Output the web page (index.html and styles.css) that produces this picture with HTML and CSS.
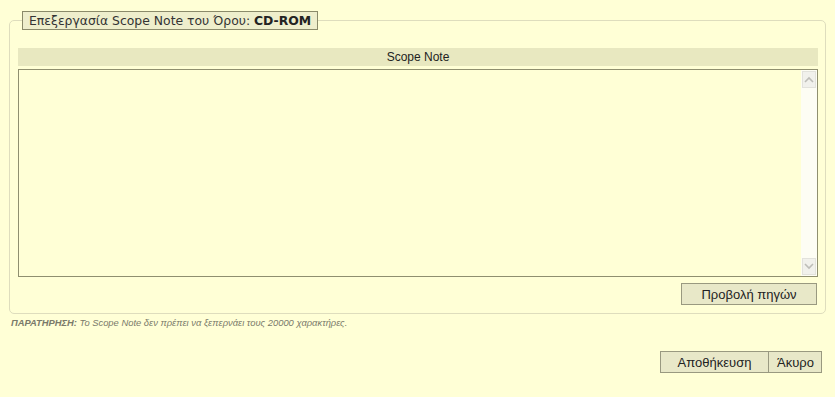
FILE: index.html
```html
<!DOCTYPE html>
<html lang="el">
<head>
  <meta charset="UTF-8" />
  <title>Επεξεργασία Scope Note</title>
  <link rel="stylesheet" href="styles.css">
</head>
<body>

<div class="page">
  <!-- Editor -->
  <fieldset class="editor">
    <legend>Επεξεργασία Scope Note του Όρου: <strong>CD-ROM</strong></legend>

    <div class="bar">Scope Note</div>

    <div class="note-box">
      <textarea class="note-text"></textarea>
      <div class="scroll">
        <span class="arrow">
          <svg width="10" height="7" viewBox="0 0 10 7"><path d="M1 6 L5 2 L9 6" fill="none" stroke="#bdbdb8" stroke-width="1.6"/></svg>
        </span>
        <span class="arrow">
          <svg width="10" height="7" viewBox="0 0 10 7"><path d="M1 1 L5 5 L9 1" fill="none" stroke="#bdbdb8" stroke-width="1.6"/></svg>
        </span>
      </div>
    </div>

    <div class="row">
      <button class="btn">Προβολή πηγών</button>
    </div>
  </fieldset>

  <p class="hint"><strong>ΠΑΡΑΤΗΡΗΣΗ:</strong> Το Scope Note δεν πρέπει να ξεπερνάει τους 20000 χαρακτήρες.</p>

  <!-- Actions -->
  <div class="actions">
    <button class="btn save">Αποθήκευση</button><button class="btn cancel">Άκυρο</button>
  </div>
</div>

</body>
</html>
```

FILE: styles.css
```css
body {
  margin: 0;
  background: #ffffd6;
  color: #222;
  font-family: "Liberation Sans", Arial, sans-serif;
}

.page {
  padding: 11px 9px 0 9px;
}

.editor {
  margin: 0;
  padding: 18px 7px 8px 8px;
  border: 1px solid #deddbd;
  border-radius: 5px;
}

.editor legend {
  margin-left: 4px;
  padding: 1px 6px;
  background: #eeeecc;
  border: 1px solid #8a8a6a;
  font-family: "DejaVu Sans", Verdana, sans-serif;
  font-size: 12.4px;
  color: #333;
}

.editor legend strong {
  color: #222;
}

.bar {
  height: 18px;
  line-height: 18px;
  background: #e8e8c0;
  text-align: center;
  font-size: 12px;
  color: #222;
}

.note-box {
  display: flex;
  margin-top: 3px;
  height: 206px;
  border: 1px solid #8f8f6f;
}

.note-text {
  flex: 1;
  margin: 0;
  padding: 2px;
  border: none;
  background: transparent;
  resize: none;
  outline: none;
  font-family: "Liberation Sans", Arial, sans-serif;
}

.scroll {
  width: 16px;
  background: #fdfdf4;
  display: flex;
  flex-direction: column;
  justify-content: space-between;
}

.arrow {
  display: flex;
  align-items: center;
  justify-content: center;
  height: 15px;
  margin: 1px;
  border: 1px solid #e2e2dc;
  background: #f1f1ec;
}

.row {
  display: flex;
  justify-content: flex-end;
  padding: 6px 1px 0 0;
}

.btn {
  height: 22px;
  margin: 0;
  padding: 0 8px;
  background: #e8e8c8;
  border: 1px solid #999980;
  font-family: "Liberation Sans", Arial, sans-serif;
  font-size: 13px;
  color: #222;
}

.row .btn {
  width: 136px;
}

.hint {
  margin: 3px 0 0 2px;
  font-size: 9.4px;
  font-style: italic;
  color: #7a7a6a;
}

.actions {
  display: flex;
  justify-content: flex-end;
  margin-top: 23px;
  padding-right: 4px;
}

.save {
  width: 109px;
}

.cancel {
  width: 53px;
  border-left: none;
}
```
